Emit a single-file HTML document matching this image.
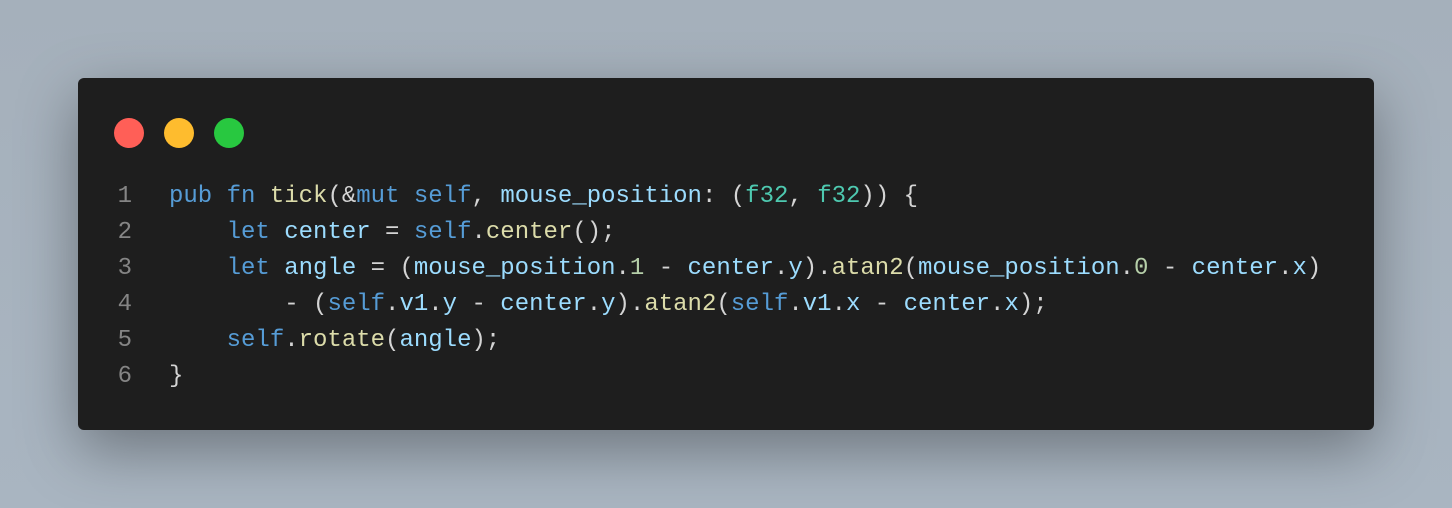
<!DOCTYPE html>
<html><head><style>
html,body{margin:0;padding:0;width:1452px;height:508px;overflow:hidden}
body{background:linear-gradient(180deg,#a5b0bb,#a9b5c1);position:relative}
.win{position:absolute;left:78px;top:78px;width:1296px;height:352px;background:#1e1e1e;border-radius:6px;box-shadow:0 20px 60px rgba(0,0,0,.35)}
.dot{position:absolute;top:40px;width:30px;height:30px;border-radius:50%}
pre{position:absolute;left:0;top:101px;margin:0;font-family:"Liberation Mono",monospace;font-size:24px;line-height:36px;color:#d4d4d4}
.ln{display:inline-block;width:54px;text-align:right;color:#858585;margin-right:37px}
.k{color:#569cd6}.f{color:#dcdcaa}.v{color:#9cdcfe}.t{color:#4ec9b0}.n{color:#b5cea8}
</style></head><body>
<div class="win">
<div class="dot" style="left:36px;background:#ff5f57"></div>
<div class="dot" style="left:86px;background:#febc2e"></div>
<div class="dot" style="left:136px;background:#28c840"></div>
<pre><span class="ln">1</span><span class="k">pub</span> <span class="k">fn</span> <span class="f">tick</span>(&amp;<span class="k">mut</span> <span class="k">self</span>, <span class="v">mouse_position</span>: (<span class="t">f32</span>, <span class="t">f32</span>)) {
<span class="ln">2</span>    <span class="k">let</span> <span class="v">center</span> = <span class="k">self</span>.<span class="f">center</span>();
<span class="ln">3</span>    <span class="k">let</span> <span class="v">angle</span> = (<span class="v">mouse_position</span>.<span class="n">1</span> - <span class="v">center</span>.<span class="v">y</span>).<span class="f">atan2</span>(<span class="v">mouse_position</span>.<span class="n">0</span> - <span class="v">center</span>.<span class="v">x</span>)
<span class="ln">4</span>        - (<span class="k">self</span>.<span class="v">v1</span>.<span class="v">y</span> - <span class="v">center</span>.<span class="v">y</span>).<span class="f">atan2</span>(<span class="k">self</span>.<span class="v">v1</span>.<span class="v">x</span> - <span class="v">center</span>.<span class="v">x</span>);
<span class="ln">5</span>    <span class="k">self</span>.<span class="f">rotate</span>(<span class="v">angle</span>);
<span class="ln">6</span>}</pre>
</div>
</body></html>
